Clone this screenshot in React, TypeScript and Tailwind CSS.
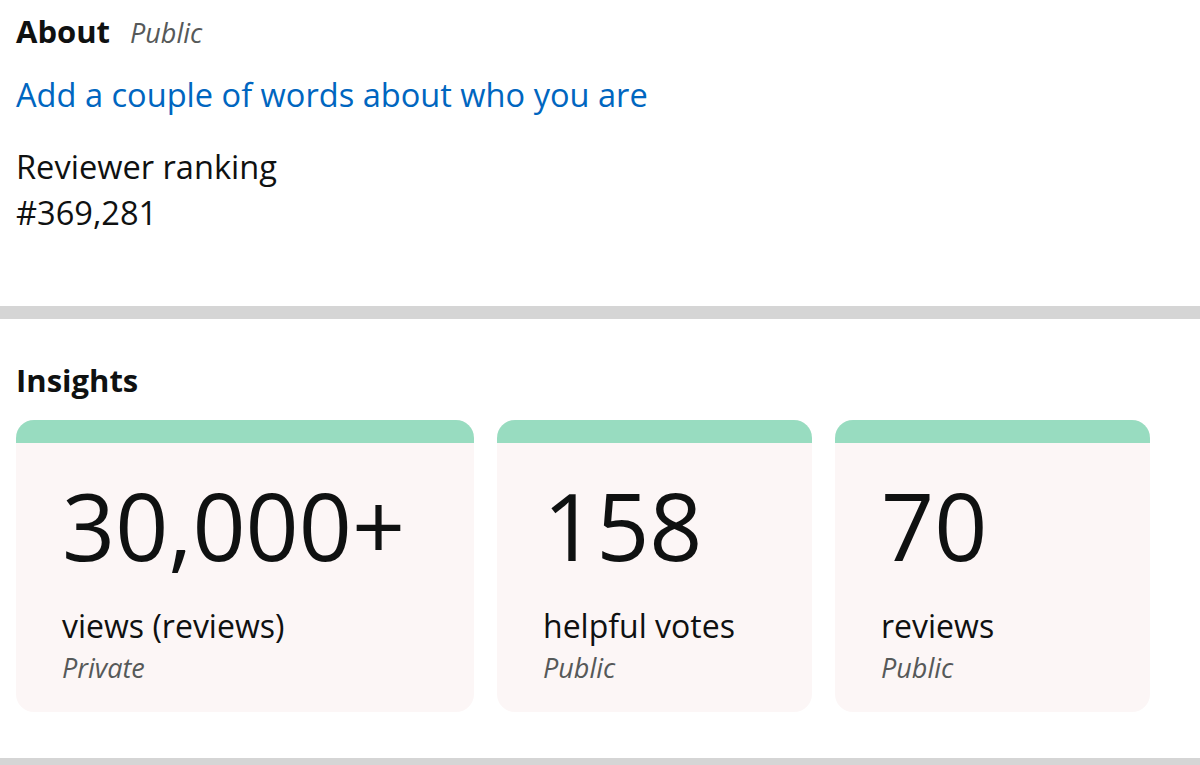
import React from 'react'

const stats = [
  { value: '30,000+', label: 'views (reviews)', scope: 'Private', width: 'w-[458px]' },
  { value: '158', label: 'helpful votes', scope: 'Public', width: 'w-[315px]' },
  { value: '70', label: 'reviews', scope: 'Public', width: 'w-[315px]' },
]

const StatCard = ({ value, label, scope, width }: { value: string; label: string; scope: string; width: string }) => {
  return (
    <div className={`${width} shrink-0 rounded-[18px] overflow-hidden bg-[#fcf6f6]`}>
      <div className="h-[23px] bg-[#98dcc0]" />
      <div className="pl-[46px] pt-[36px] pb-[26px]">
        <div className="text-[93px] leading-[93px] text-[#0f1111]">{value}</div>
        <div className="mt-[34px] text-[32px] leading-[40px] text-[#0f1111]">{label}</div>
        <div className="mt-[4px] text-[27px] leading-[36px] italic text-[#565959]">{scope}</div>
      </div>
    </div>
  )
}

const App = () => {
  return (
    <div className="w-[1200px] h-[765px] overflow-hidden bg-white font-['Open_Sans',sans-serif]">
      <section className="px-4 pt-2">
        <div className="flex items-baseline gap-5 leading-[46px]">
          <span className="text-[31px] font-bold text-[#0f1111]">About</span>
          <span className="text-[27px] italic text-[#565959]">Public</span>
        </div>
        <a href="/" className="block mt-4 text-[32.6px] leading-[46px] text-[#0066c0]">
          Add a couple of words about who you are
        </a>
        <div className="mt-[26px] text-[32.6px] leading-[46px] text-[#0f1111]">
          <div>Reviewer ranking</div>
          <div>#369,281</div>
        </div>
      </section>

      <div className="mt-[70px] h-[13px] bg-[#d5d5d5]" />

      <section className="px-4 pt-[41px]">
        <h2 className="text-[31px] leading-[40px] font-bold text-[#0f1111]">Insights</h2>
        <div className="mt-5 flex gap-[23px]">
          {stats.map((s) => (
            <StatCard key={s.label} {...s} />
          ))}
        </div>
      </section>

      <div className="mt-[46px] h-[13px] bg-[#d5d5d5]" />
    </div>
  )
}

export default App
